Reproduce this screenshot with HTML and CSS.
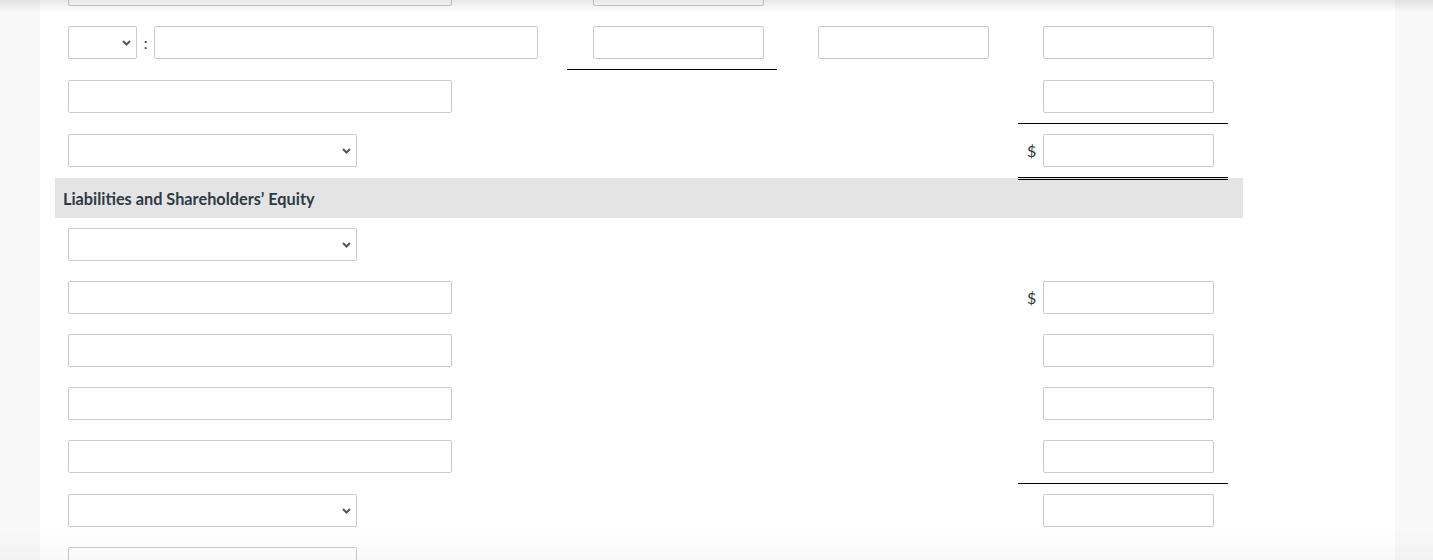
FILE: index.html
```html
<!DOCTYPE html>
<html lang="en">
<head>
<meta charset="utf-8">
<title>Balance Sheet</title>
<link rel="stylesheet" href="styles.css">
</head>
<body>
<div class="page">
  <div class="panel">
    <div class="sheet">
      <div class="row first">
        <div class="c1"><div class="inp wide"></div></div>
        <div class="c2"><div class="sign"></div><div class="inp num"></div></div>
        <div class="c3"></div>
        <div class="c4"></div>
      </div>

      <div class="row lined">
        <div class="c1 combo">
          <div class="sel tiny"><svg class="chev" width="9" height="6" viewBox="0 0 9 6"><path d="M1 1l3.5 3.5L8 1" fill="none" stroke="#555" stroke-width="2"/></svg></div>
          <span class="colon">:</span>
          <div class="inp wide"></div>
        </div>
        <div class="c2 under"><div class="sign"></div><div class="inp num"></div></div>
        <div class="c3"><div class="inp num"></div></div>
        <div class="c4"><div class="sign"></div><div class="inp num"></div></div>
      </div>

      <div class="row lined">
        <div class="c1"><div class="inp wide"></div></div>
        <div class="c2"></div>
        <div class="c3"></div>
        <div class="c4 under"><div class="sign"></div><div class="inp num"></div></div>
      </div>

      <div class="row lined short">
        <div class="c1"><div class="sel mid"><svg class="chev" width="9" height="6" viewBox="0 0 9 6"><path d="M1 1l3.5 3.5L8 1" fill="none" stroke="#555" stroke-width="2"/></svg></div></div>
        <div class="c2"></div>
        <div class="c3"></div>
        <div class="c4 double"><div class="sign">$</div><div class="inp num"></div></div>
      </div>

      <div class="band">Liabilities and Shareholders’ Equity</div>

      <div class="row">
        <div class="c1"><div class="sel mid"><svg class="chev" width="9" height="6" viewBox="0 0 9 6"><path d="M1 1l3.5 3.5L8 1" fill="none" stroke="#555" stroke-width="2"/></svg></div></div>
        <div class="c2"></div>
        <div class="c3"></div>
        <div class="c4"></div>
      </div>

      <div class="row">
        <div class="c1"><div class="inp wide"></div></div>
        <div class="c2"></div>
        <div class="c3"></div>
        <div class="c4"><div class="sign">$</div><div class="inp num"></div></div>
      </div>

      <div class="row">
        <div class="c1"><div class="inp wide"></div></div>
        <div class="c2"></div>
        <div class="c3"></div>
        <div class="c4"><div class="sign"></div><div class="inp num"></div></div>
      </div>

      <div class="row">
        <div class="c1"><div class="inp wide"></div></div>
        <div class="c2"></div>
        <div class="c3"></div>
        <div class="c4"><div class="sign"></div><div class="inp num"></div></div>
      </div>

      <div class="row lined">
        <div class="c1"><div class="inp wide"></div></div>
        <div class="c2"></div>
        <div class="c3"></div>
        <div class="c4 under"><div class="sign"></div><div class="inp num"></div></div>
      </div>

      <div class="row">
        <div class="c1"><div class="sel mid"><svg class="chev" width="9" height="6" viewBox="0 0 9 6"><path d="M1 1l3.5 3.5L8 1" fill="none" stroke="#555" stroke-width="2"/></svg></div></div>
        <div class="c2"></div>
        <div class="c3"></div>
        <div class="c4"><div class="sign"></div><div class="inp num"></div></div>
      </div>

      <div class="row">
        <div class="c1"><div class="sel mid"><svg class="chev" width="9" height="6" viewBox="0 0 9 6"><path d="M1 1l3.5 3.5L8 1" fill="none" stroke="#555" stroke-width="2"/></svg></div></div>
        <div class="c2"></div>
        <div class="c3"></div>
        <div class="c4"></div>
      </div>
    </div>
  </div>
</div>
<div class="shade-top"></div>
<div class="shade-bottom"></div>
</body>
</html>
```

FILE: styles.css
```css
html, body {
  margin: 0;
  padding: 0;
  background: #f8f8f8;
  height: 560px;
  overflow: hidden;
  font-family: Lato, "Liberation Sans", sans-serif;
  color: #2d3b45;
}

.page {
  display: flex;
  padding-left: 40px;
  padding-right: 38px;
}

.panel {
  flex: 1;
  background: #fff;
  padding-left: 15px;
  height: 597px;
  overflow: hidden;
  margin-top: -37px;
}

.sheet {
  width: 1188px;
  display: flex;
  flex-direction: column;
}

.row {
  display: grid;
  grid-template-columns: 497px 210px 211px 210px;
  column-gap: 15px;
  height: 53px;
  align-items: start;
  flex: none;
}

.row.lined {
  height: 54px;
}

.c1, .c2, .c3, .c4 {
  display: flex;
  align-items: center;
  box-sizing: border-box;
  height: 53px;
  padding-top: 10px;
  padding-bottom: 10px;
}

.c1 {
  padding-left: 13px;
}

.c3 {
  padding-left: 26px;
}

.under {
  height: 54px;
  border-bottom: 1px solid #000;
  position: relative;
}

.double {
  height: 56px;
  border-bottom: 3px double #000;
  position: relative;
  z-index: 1;
}

.band {
  flex: none;
  height: 40px;
  background: #e4e4e4;
  display: flex;
  align-items: center;
  padding-left: 8px;
  font-weight: 700;
  font-size: 16.3px;
}

.inp, .sel {
  box-sizing: border-box;
  height: 33px;
  border: 1px solid #cacaca;
  border-radius: 2px;
  background: #fff;
  flex: none;
}

.inp.wide {
  width: 384px;
}

.inp.num {
  width: 171px;
}

.sel {
  display: flex;
  align-items: center;
  justify-content: flex-end;
  padding-right: 5px;
}

.sel.mid {
  width: 289px;
}

.sel.tiny {
  width: 69px;
}

.chev {
  display: block;
}

.colon {
  width: 17px;
  text-align: center;
  font-size: 15px;
  flex: none;
}

.sign {
  width: 26px;
  flex: none;
  box-sizing: border-box;
  padding-left: 9px;
  font-size: 16px;
}

.c4 .sign {
  width: 25px;
}

.shade-top {
  position: fixed;
  left: 0;
  right: 0;
  top: 0;
  height: 12px;
  background: linear-gradient(to bottom, rgba(0,0,0,0.09), rgba(0,0,0,0));
  pointer-events: none;
}

.shade-bottom {
  position: fixed;
  left: 0;
  right: 0;
  bottom: 0;
  height: 30px;
  background: linear-gradient(to bottom, rgba(0,0,0,0), rgba(0,0,0,0.025));
  pointer-events: none;
}
```
